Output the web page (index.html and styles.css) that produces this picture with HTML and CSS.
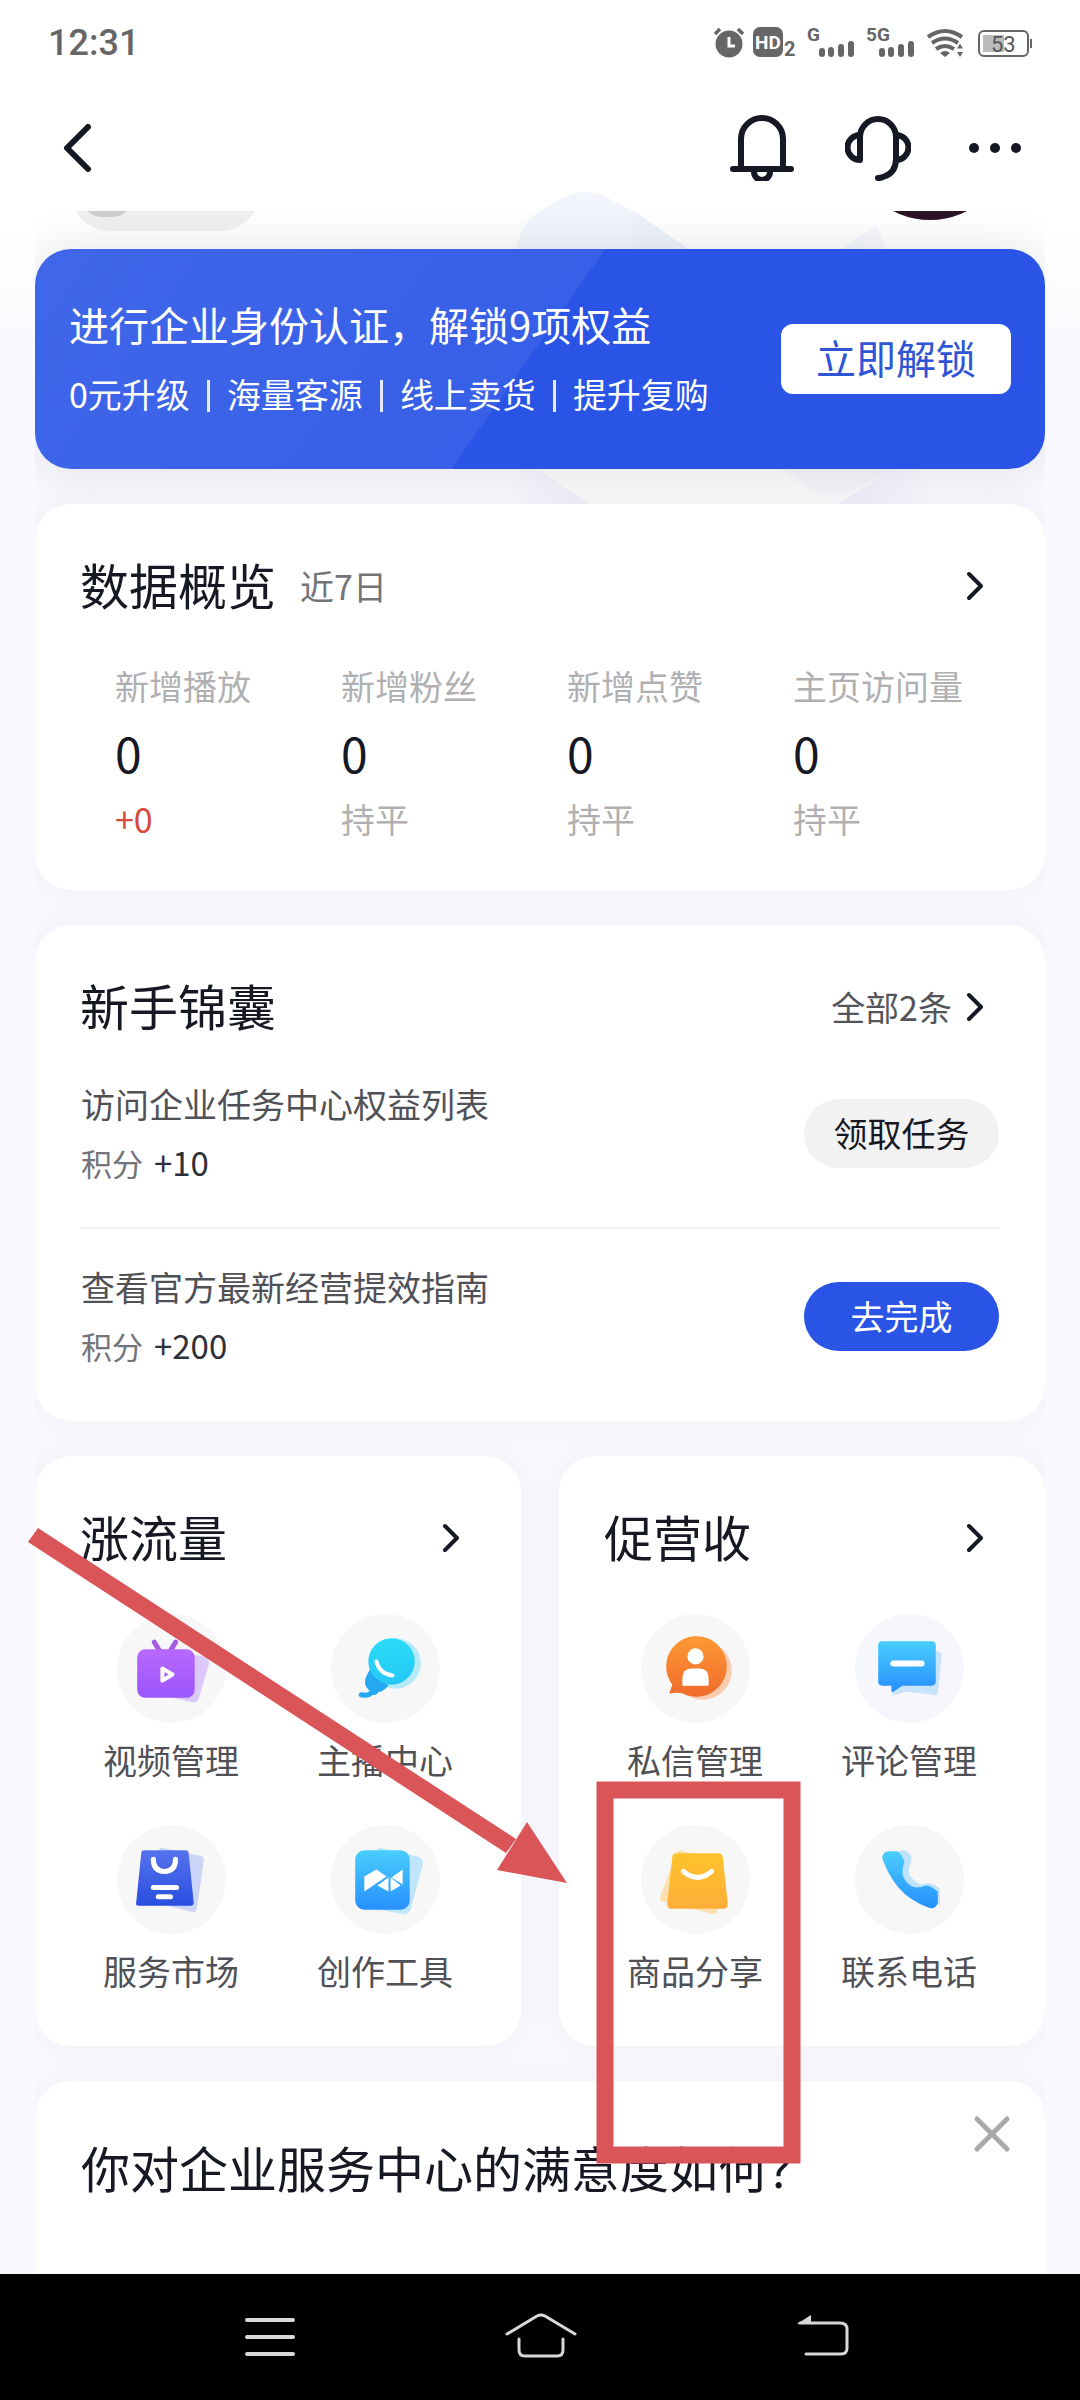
FILE: index.html
```html
<!DOCTYPE html>
<html lang="zh-CN">
<head>
  <meta charset="UTF-8">
  <meta name="viewport" content="width=device-width, initial-scale=1.0">
  <title>企业服务中心</title>
  <link rel="stylesheet" href="styles.css">
</head>
<body>
  <!-- pale shapes behind the banner -->
  <svg class="backdrop" width="460" height="330" viewBox="0 0 460 330" aria-hidden="true">
    <defs>
      <linearGradient id="fade"><stop offset="0" stop-color="#eeeff9" stop-opacity="0"/><stop offset="0.200" stop-color="#ecedf8"/><stop offset="0.800" stop-color="#ecedf8"/><stop offset="1" stop-color="#eeeff9" stop-opacity="0"/></linearGradient>
      <linearGradient id="fade-right"><stop offset="0" stop-color="#ebf0f9"/><stop offset="1" stop-color="#f2f4fb" stop-opacity="0.500"/></linearGradient>
    </defs>
    <path d="M15 80Q18 44 40 31L62 18Q84 6 108 18L133 31L205 80Z" fill="#f3f5fc"/>
    <path d="M133 31L205 80H133Z" fill="#edf1f9"/>
    <path d="M325 80L377 45L390 80Z" fill="url(#fade-right)"/>
    <path d="M10 280H430V330H10Z" fill="url(#fade)"/>
    <path d="M30 280L40 291L98 330H328L376 300L400 280Z" fill="#fafafc"/>
    <path d="M268 280L310 308Q325 318 350 312Q370 305 400 280Z" fill="#f4f5fa"/>
  </svg>

  <div class="status-bar">
    <span class="time">12:31</span>
    <svg class="status-icons" width="322" height="44" viewBox="712 21 322 44" aria-hidden="true">
      <g fill="#666">
        <circle cx="729" cy="44" r="13.5"/>
        <path d="M715 34l5-5M743 34l-5-5" stroke="#666" stroke-width="3.5"/>
        <path d="M729 37v9h6" fill="none" stroke="#fff" stroke-width="3"/>
        <rect x="753" y="27" width="30" height="30" rx="7"/>
        <rect x="819" y="48" width="6" height="9" rx="3"/>
        <rect x="828" y="47" width="6" height="10" rx="3"/>
        <rect x="838" y="44" width="6" height="13" rx="3"/>
        <rect x="848" y="41" width="6" height="16" rx="3"/>
        <rect x="879" y="48" width="6" height="9" rx="3"/>
        <rect x="888" y="47" width="6" height="10" rx="3"/>
        <rect x="898" y="44" width="6" height="13" rx="3"/>
        <rect x="908" y="41" width="6" height="16" rx="3"/>
        <path d="M940 53q5-4 10 0l-5 4zM960 43.500l3 5h-6zM960 57l3-5h-6z"/>
      </g>
      <g fill="none" stroke="#666" stroke-width="4">
        <path d="M928 37q17-12 34 0M932 43q13-9 26 0M936 49q9-6 18 0"/>
        <rect x="979" y="31" width="49" height="25" rx="5" stroke-width="2"/>
        <path d="M1031 39v9" stroke-width="2"/>
      </g>
      <rect x="983" y="35" width="21" height="17" fill="#bbb"/>
      <g class="status-text" fill="#666">
        <text x="755" y="49" font-size="19" fill="#fff">HD</text>
        <text x="784" y="56" font-size="20">2</text>
        <text x="807" y="41" font-size="19">G</text>
        <text x="866" y="41" font-size="19">5G</text>
        <text x="991" y="52" font-size="22" font-weight="400" fill="#555">53</text>
      </g>
    </svg>
  </div>

  <header class="header">
    <button class="icon-btn" aria-label="返回">
      <svg width="32" height="56" viewBox="0 0 32 56"><path d="M25 7L4 28L25 49" fill="none" stroke="#161823" stroke-width="6" stroke-linecap="round" stroke-linejoin="round"/></svg>
    </button>
    <div class="header-actions">
      <button class="icon-btn" aria-label="通知">
        <svg width="66" height="66" viewBox="0 0 66 66"><path d="M12 54V24a21 21 0 0 1 42 0v30M4 54h58M25 57a8 8 0 0 0 16 0" fill="none" stroke="#161823" stroke-width="6" stroke-linecap="round"/></svg>
      </button>
      <button class="icon-btn" aria-label="客服">
        <svg width="66" height="66" viewBox="0 0 66 66"><path d="M15 45V22a18 18 0 0 1 36 0v22q0 14-13 18-2 1-5 1M15 20a12 12 0 0 0 0 25M51 20a12 12 0 0 1 0 25" fill="none" stroke="#161823" stroke-width="6" stroke-linecap="round"/></svg>
      </button>
      <button class="icon-btn" aria-label="更多">
        <svg width="62" height="66" viewBox="-6 0 62 66"><g fill="#161823"><circle cx="7" cy="33" r="5"/><circle cx="28" cy="33" r="5"/><circle cx="49" cy="33" r="5"/></g></svg>
      </button>
    </div>
  </header>

  <main class="content">
    <!-- bottom edge of the profile row that is scrolled away -->
    <div class="profile-row">
      <div class="profile-pill"><span class="pill-dot"></span></div>
      <div class="avatar"></div>
    </div>

    <section class="banner">
      <div class="banner-text">
        <h2>进行企业身份认证，解锁9项权益</h2>
        <p><span>0元升级</span><span>海量客源</span><span>线上卖货</span><span>提升复购</span></p>
      </div>
      <button class="unlock-btn">立即解锁</button>
    </section>

    <section class="card">
      <div class="card-head">
        <h3>数据概览</h3>
        <span class="period">近7日</span>
        <a class="more" href="#" aria-label="查看数据"><svg class="chevron" viewBox="0 0 20 32"><path d="M4 4L16 16L4 28"/></svg></a>
      </div>
      <div class="stats">
        <div class="stat"><p class="stat-name">新增播放</p><p class="stat-value">0</p><p class="stat-change up">+0</p></div>
        <div class="stat"><p class="stat-name">新增粉丝</p><p class="stat-value">0</p><p class="stat-change">持平</p></div>
        <div class="stat"><p class="stat-name">新增点赞</p><p class="stat-value">0</p><p class="stat-change">持平</p></div>
        <div class="stat"><p class="stat-name">主页访问量</p><p class="stat-value">0</p><p class="stat-change">持平</p></div>
      </div>
    </section>

    <section class="card">
      <div class="card-head">
        <h3>新手锦囊</h3>
        <a class="more" href="#">全部2条<svg class="chevron" viewBox="0 0 20 32"><path d="M4 4L16 16L4 28"/></svg></a>
      </div>
      <div class="tasks">
        <div class="task">
          <div>
            <p class="task-name">访问企业任务中心权益列表</p>
            <p class="task-score">积分 <b>+10</b></p>
          </div>
          <button class="task-btn">领取任务</button>
        </div>
        <div class="task">
          <div>
            <p class="task-name">查看官方最新经营提效指南</p>
            <p class="task-score">积分 <b>+200</b></p>
          </div>
          <button class="task-btn primary">去完成</button>
        </div>
      </div>
    </section>

    <div class="panels">
      <section class="card">
        <div class="card-head">
          <h3>涨流量</h3>
          <a class="more" href="#" aria-label="更多涨流量"><svg class="chevron" viewBox="0 0 20 32"><path d="M4 4L16 16L4 28"/></svg></a>
        </div>
        <div class="tools">
          <a class="tool" href="#">
            <svg viewBox="0 0 108 108">
              <defs><linearGradient id="purple" x2="0" y2="1"><stop offset="0" stop-color="#b968fb"/><stop offset="1" stop-color="#9a55fb"/></linearGradient></defs>
              <path d="M40 34L86 42Q92 44 91 50L81 84Q79 89 73 87L50 82Z" fill="#dcc8fb"/>
              <path d="M37 28L43 38M58 28L52 38" stroke="#a45be6" stroke-width="5" stroke-linecap="round"/>
              <rect x="20" y="35" width="57" height="48" rx="8" fill="url(#purple)"/>
              <path d="M45 54L55 60L45 66Z" fill="none" stroke="#fff" stroke-width="4" stroke-linejoin="round"/>
            </svg>
            <span>视频管理</span>
          </a>
          <a class="tool" href="#">
            <svg viewBox="0 0 108 108">
              <defs><linearGradient id="cyan" x2="0" y2="1"><stop offset="0" stop-color="#2bdcf8"/><stop offset="1" stop-color="#25c8f5"/></linearGradient></defs>
              <circle cx="64" cy="49" r="25" fill="#b5eaf8"/>
              <path d="M44 70Q46 80 41 77Q37 82 30 80" fill="none" stroke="#26a9f0" stroke-width="5" stroke-linecap="round"/>
              <path d="M39 54L57 71Q48 81 38 76Q31 70 35 62Z" fill="#25a8ef"/>
              <circle cx="60" cy="47" r="23" fill="url(#cyan)"/>
              <path d="M45 47Q48 59 61 61" fill="none" stroke="#fff" stroke-width="4" stroke-linecap="round"/>
            </svg>
            <span>主播中心</span>
          </a>
          <a class="tool" href="#">
            <svg viewBox="0 0 108 108">
              <defs><linearGradient id="indigo" x2="0" y2="1"><stop offset="0" stop-color="#5673ee"/><stop offset="1" stop-color="#294edf"/></linearGradient></defs>
              <path d="M42 22L84 31Q86 32 86 35L79 84Q78 87 74 86L46 79Z" fill="#ccd4f8"/>
              <path d="M27 25H68Q71 25 71 28L76 77Q76 80 73 80H22Q18 80 19 77L24 28Q24 25 27 25Z" fill="url(#indigo)"/>
              <path d="M36 34Q36 46 47 46Q58 46 58 34M36 62H59M41 71H53" fill="none" stroke="#fff" stroke-width="5" stroke-linecap="round"/>
            </svg>
            <span>服务市场</span>
          </a>
          <a class="tool" href="#">
            <svg viewBox="0 0 108 108">
              <defs><linearGradient id="sky" x2="0" y2="1"><stop offset="0" stop-color="#49cefd"/><stop offset="1" stop-color="#278fff"/></linearGradient></defs>
              <path d="M46 22L85 31Q92 33 91 39L79 83Q77 89 70 88L42 83Z" fill="#bfe5fb"/>
              <rect x="24" y="25" width="54" height="59" rx="9" fill="url(#sky)"/>
              <path d="M33 51L45 44L55 51L33 66ZM57 52V66L46 60ZM59 52V66L69 60ZM60 52L71 44V59Z" fill="#fff"/>
            </svg>
            <span>创作工具</span>
          </a>
        </div>
      </section>

      <section class="card">
        <div class="card-head">
          <h3>促营收</h3>
          <a class="more" href="#" aria-label="更多促营收"><svg class="chevron" viewBox="0 0 20 32"><path d="M4 4L16 16L4 28"/></svg></a>
        </div>
        <div class="tools">
          <a class="tool" href="#">
            <svg viewBox="0 0 108 108">
              <defs><linearGradient id="orange" x2="0" y2="1"><stop offset="0" stop-color="#ff9835"/><stop offset="1" stop-color="#ef6c2b"/></linearGradient></defs>
              <circle cx="61" cy="56" r="29" fill="#fbcbb0"/>
              <path d="M28 79L31 70A30 30 0 1 1 42 79Q36 77 28 79Z" fill="url(#orange)"/>
              <circle cx="54" cy="42" r="8" fill="#fff"/>
              <path d="M41 71V64Q41 54 50 54H58Q67 54 67 64V71Z" fill="#fff"/>
            </svg>
            <span>私信管理</span>
          </a>
          <a class="tool blue" href="#">
            <svg viewBox="0 0 108 108">
              <path d="M38 40L82 37Q86 38 86 42L82 78Q81 81 78 80L50 77L37 81Z" fill="#c8e3fc"/>
              <path d="M27 27H76Q80 27 80 31V67Q80 71 76 71H47L38 77Q36 78 36 75V71H27Q23 71 23 67V31Q23 27 27 27Z" fill="url(#sky)"/>
              <path d="M38 49H66" stroke="#fff" stroke-width="6" stroke-linecap="round"/>
            </svg>
            <span>评论管理</span>
          </a>
          <a class="tool" href="#">
            <svg viewBox="0 0 108 108">
              <defs><linearGradient id="yellow" x2="0" y2="1"><stop offset="0" stop-color="#fdc22c"/><stop offset="1" stop-color="#feae38"/></linearGradient></defs>
              <path d="M39 25L78 36L76 86Q74 89 70 88L22 76Q18 75 19 71L35 28Q36 25 39 25Z" fill="#fde0b0"/>
              <path d="M35 28H77Q80 28 81 32L86 78Q86 83 82 83H30Q26 83 26 78L31 32Q31 28 35 28Z" fill="url(#yellow)"/>
              <path d="M42 46Q56 58 70 46" fill="none" stroke="#fff" stroke-width="5" stroke-linecap="round"/>
            </svg>
            <span>商品分享</span>
          </a>
          <a class="tool" href="#">
            <svg viewBox="0 0 108 108">
              <path d="M41 27Q48 23 53 27Q58 32 55 38Q50 49 60 56Q64 60 70 58Q78 57 84 63V80L70 70L50 62Z" fill="#bfe3fc"/>
              <path d="M27 33Q27 27 33 26H41Q45 27 47 32L49 36Q47 42 47 49Q50 59 60 62Q66 62 70 60Q74 59 82 66V77Q80 84 73 82Q54 75 43 62Q33 50 27 33Z" fill="url(#sky)"/>
            </svg>
            <span>联系电话</span>
          </a>
        </div>
      </section>
    </div>

    <section class="card survey">
      <h3>你对企业服务中心的满意度如何？</h3>
      <button class="icon-btn close" aria-label="关闭">
        <svg width="40" height="40" viewBox="0 0 40 40"><path d="M5 5L35 35M35 5L5 35" stroke="#a9a9ab" stroke-width="5" stroke-linecap="round"/></svg>
      </button>
    </section>
  </main>

  <!-- marker arrow and frame drawn over the page -->
  <svg class="marks" width="800" height="660" viewBox="20 1520 800 660" aria-hidden="true">
    <path d="M38 1528L516 1839L506 1853L28 1542Z" fill="#d95558"/>
    <path d="M527 1822L567 1883L497 1870Z" fill="#d95558"/>
    <rect x="605" y="1790" width="187" height="365" fill="none" stroke="#d95558" stroke-width="17"/>
  </svg>

  <nav class="nav-bar">
    <button class="icon-btn" aria-label="菜单">
      <svg width="76" height="50" viewBox="0 0 76 50"><path d="M28 8H74M28 25H74M28 42H74" stroke="#d8d8d8" stroke-width="4" stroke-linecap="round"/></svg>
    </button>
    <button class="icon-btn" aria-label="主页">
      <svg width="76" height="50" viewBox="0 0 76 50"><path d="M5 22L35 4Q39 2 43 4L73 22M17 27V38Q17 44 23 44H55Q61 44 61 38V27" fill="none" stroke="#d8d8d8" stroke-width="3" stroke-linecap="round"/></svg>
    </button>
    <button class="icon-btn" aria-label="后退">
      <svg width="76" height="50" viewBox="0 0 76 50"><path d="M15 11H55Q62 11 62 17V36Q62 42 56 42H21" fill="none" stroke="#d8d8d8" stroke-width="3" stroke-linecap="round"/><path d="M26 3V12H12Z" fill="#d8d8d8"/></svg>
    </button>
  </nav>
</body>
</html>
```

FILE: styles.css
```css
* {
  box-sizing: border-box;
  margin: 0;
  padding: 0;
}

body {
  position: relative;
  display: flex;
  flex-direction: column;
  min-height: 100vh;
  font-family: "Noto Sans CJK SC", sans-serif;
  font-size: 34px;
  line-height: 40px;
  color: #161823;
  background: linear-gradient(#fff 211px, #f8f8fe 400px);
}

button {
  border: none;
  font: inherit;
  color: inherit;
  cursor: pointer;
}

a {
  color: inherit;
  text-decoration: none;
}

h2,
h3,
b {
  font-weight: 400;
}

svg {
  display: block;
}

.backdrop {
  position: absolute;
  top: 180px;
  left: 500px;
  z-index: -1;
}

.status-bar {
  display: flex;
  justify-content: space-between;
  align-items: center;
  height: 84px;
  padding: 2px 46px 0 48px;
}

.time {
  font-family: Roboto, sans-serif;
  font-size: 36px;
  font-weight: 500;
  color: #666;
}

.status-text {
  font-family: Roboto, sans-serif;
  font-weight: 700;
}

.header {
  display: flex;
  justify-content: space-between;
  align-items: center;
  height: 127px;
  padding: 0 57px 0 63px;
}

.header-actions {
  display: flex;
  gap: 50px;
}

.icon-btn {
  background: none;
}

.content {
  flex: 1;
  display: flex;
  flex-direction: column;
  gap: 35px;
  margin: 0 35px;
  overflow: hidden;
}

.profile-row {
  display: flex;
  justify-content: space-between;
  align-items: flex-end;
  height: 20px;
  margin-bottom: -17px;
  padding: 0 35px;
}

.profile-pill {
  width: 190px;
  height: 80px;
  padding: 26px 12px;
  border-radius: 40px;
  background: #f0f0f2;
}

.pill-dot {
  display: block;
  width: 50px;
  height: 40px;
  border-radius: 25px;
  background: #cdcdd2;
}

.avatar {
  width: 160px;
  height: 160px;
  margin-bottom: 11px;
  border-radius: 50%;
  background: #2b1524;
}

.banner {
  display: flex;
  justify-content: space-between;
  align-items: center;
  height: 220px;
  padding: 0 34px;
  border-radius: 36px;
  color: #fff;
  background: linear-gradient(125deg, #4067e9 0%, #375fe7 49%, #2954e5 49%);
  box-shadow: 0 0 50px rgba(0, 0, 0, 0.1);
}

.banner-text {
  padding-bottom: 6px;
}

.banner h2 {
  font-size: 40px;
  line-height: 50px;
  margin-bottom: 25px;
}

.banner span + span::before {
  content: "";
  display: inline-block;
  width: 3px;
  height: 32px;
  margin: 0 17px;
  vertical-align: -4px;
  background: #e6ebfc;
}

.unlock-btn {
  width: 230px;
  height: 70px;
  padding-bottom: 4px;
  border-radius: 12px;
  font-size: 40px;
  color: #2f55d4;
  background: #fff;
}

.card {
  border-radius: 36px;
  background: #fff;
  box-shadow: 0 0 40px rgba(0, 0, 20, 0.04);
}

.card h3 {
  font-size: 49px;
  line-height: 60px;
}

.card-head {
  display: flex;
  align-items: center;
  padding: 50px 60px 0 45px;
}

.period {
  margin-left: 24px;
  padding-top: 4px;
  color: #737479;
}

.more {
  display: flex;
  align-items: center;
  gap: 13px;
  margin-left: auto;
  padding-top: 4px;
  color: #54555b;
}

.chevron {
  width: 20px;
  height: 32px;
  fill: none;
  stroke: #161823;
  stroke-width: 4;
  stroke-linecap: round;
  stroke-linejoin: round;
}

.stats {
  display: grid;
  grid-template-columns: repeat(4, 1fr);
  padding: 52px 26px 51px 80px;
}

.stat-name,
.stat-change {
  color: #b0b0b2;
}

.stat-value {
  margin: 18px 0 19px;
  font-size: 48px;
  line-height: 56px;
}

.stat-change.up {
  color: #d84a3c;
}

.tasks {
  padding: 11px 46px 11px;
}

.task {
  display: flex;
  justify-content: space-between;
  align-items: center;
  padding: 38px 0 44px;
}

.task + .task {
  border-top: 2px solid #f3f3f5;
}

.task-name {
  margin-bottom: 18px;
  color: #505157;
}

.task-score {
  font-size: 31px;
  color: #737479;
}

.task-score b {
  margin-left: 4px;
  font-size: 33px;
  color: #2e303a;
}

.task-btn {
  width: 195px;
  height: 69px;
  padding-bottom: 2px;
  border-radius: 35px;
  background: #f2f2f3;
}

.task-btn.primary {
  color: #fff;
  background: #2954e5;
}

.panels {
  display: grid;
  grid-template-columns: 1fr 1fr;
  gap: 38px;
}

.tools {
  display: grid;
  grid-template-columns: 1fr 1fr;
  row-gap: 45px;
  padding: 48px 29px 55px;
}

.tool {
  display: flex;
  flex-direction: column;
  align-items: center;
  gap: 17px;
  color: #505157;
}

.tool svg {
  width: 109px;
  height: 109px;
  border-radius: 50%;
  background: #f7f7f8;
}

.tool.blue svg {
  background: #f5f7fd;
}

.survey {
  flex: 1;
  position: relative;
  padding: 56px 46px;
  border-radius: 36px 36px 0 0;
}

.close {
  position: absolute;
  top: 33px;
  right: 33px;
}

.marks {
  position: absolute;
  top: 1520px;
  left: 20px;
  pointer-events: none;
}

.nav-bar {
  display: flex;
  justify-content: center;
  align-items: center;
  gap: 207px;
  height: 126px;
  background: #000;
}
```
